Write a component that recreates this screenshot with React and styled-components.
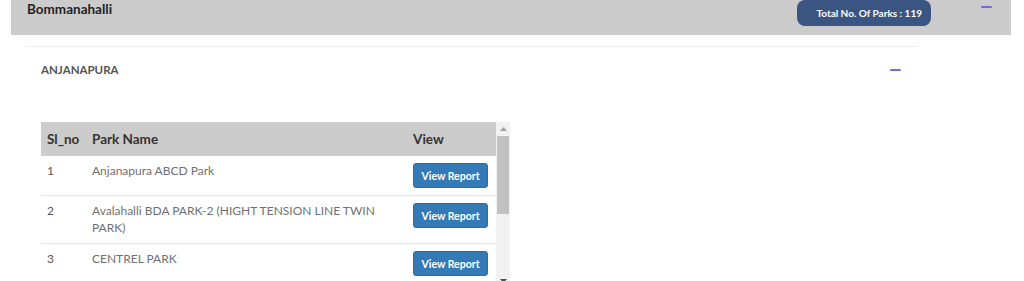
import React from "react";
import styled, { createGlobalStyle } from "styled-components";

const GlobalStyle = createGlobalStyle`
  html, body { margin: 0; padding: 0; background: #fff; }
  body { font-family: Lato, "Open Sans", "Liberation Sans", sans-serif; }
  * { box-sizing: border-box; }
`;

const Panel = styled.section`
  margin-left: 11px;
  width: 1000px;
`;

const PanelHeader = styled.header`
  display: flex;
  align-items: flex-start;
  height: 35px;
  background: #cccccc;
  padding: 0 19px 0 16px;
`;

const Title = styled.h3`
  flex: 1;
  margin: 0;
  padding-top: 1px;
  font-size: 13.5px;
  line-height: 16px;
  font-weight: 700;
  color: #222;
`;

const Badge = styled.span`
  display: flex;
  align-items: center;
  justify-content: flex-end;
  width: 134px;
  height: 26px;
  padding-right: 9px;
  border-radius: 8px;
  background: #3b5583;
  color: #fff;
  font-size: 10px;
  font-weight: 700;
  margin-right: 50px;
`;

const Minus = styled.span`
  display: block;
  width: 11px;
  height: 2px;
  border-radius: 1px;
  background: #7b67d8;
  margin-top: ${(p) => p.$top}px;
`;

const PanelBody = styled.div`
  padding: 11px 0 0 14px;
`;

const SubPanel = styled.div`
  width: 893px;
  border-top: 1px solid #efefef;
`;

const SubHeader = styled.div`
  display: flex;
  align-items: center;
  justify-content: space-between;
  padding: 13px 17px 13px 16px;
`;

const SubTitle = styled.h4`
  margin: 0;
  font-size: 11.5px;
  line-height: 20px;
  font-weight: 700;
  color: #555;
`;

const ScrollBox = styled.div`
  display: flex;
  margin: 29px 0 0 16px;
  width: 469px;
  height: 166px;
`;

const Viewport = styled.div`
  flex: 1;
  overflow: hidden;
`;

const Scrollbar = styled.div`
  display: flex;
  flex-direction: column;
  width: 14px;
  background: #f1f1f1;
`;

const ArrowBox = styled.div`
  display: flex;
  align-items: center;
  justify-content: center;
  height: 14px;
  flex: none;
`;

const Track = styled.div`
  flex: 1;
  padding: 0 1px;
`;

const Thumb = styled.div`
  height: 78px;
  background: #c1c1c1;
`;

const Table = styled.table`
  width: 100%;
  border-collapse: collapse;
`;

const Th = styled.th`
  background: #cccccc;
  text-align: left;
  font-size: 13.5px;
  line-height: 20px;
  font-weight: 700;
  color: #333;
  padding: 7px 6px;
  width: ${(p) => p.$w || "auto"};
`;

const Tr = styled.tr`
  & + & td { border-top: 1px solid #e4e4e4; }
`;

const Td = styled.td`
  vertical-align: top;
  font-size: 12px;
  line-height: 16.5px;
  color: ${(p) => (p.$num ? "#555" : "#707070")};
  padding: 7px 6px;
`;

const ReportButton = styled.button`
  display: block;
  width: 75px;
  height: 25px;
  padding: 0;
  border: 1px solid #2e6da4;
  border-radius: 3px;
  background: #337ab7;
  color: #fff;
  font-family: inherit;
  font-size: 10.5px;
  font-weight: 700;
  cursor: pointer;
`;

const parks = [
  "Anjanapura ABCD Park",
  "Avalahalli BDA PARK-2 (HIGHT TENSION LINE TWIN PARK)",
  "CENTREL PARK",
  "Gottigere Lake Park",
  "Harinagar Park",
  "Kothnur Dinne Park",
];

const Triangle = ({ down }) => (
  <svg width="7" height="4" viewBox="0 0 7 4">
    <path d={down ? "M0 0H7L3.5 4Z" : "M0 4H7L3.5 0Z"} fill={down ? "#505050" : "#a3a3a3"} />
  </svg>
);

export default function App() {
  return (
    <>
      <GlobalStyle />
      <Panel>
        <PanelHeader>
          <Title>Bommanahalli</Title>
          <Badge>Total No. Of Parks : 119</Badge>
          <Minus $top={6} />
        </PanelHeader>
        <PanelBody>
          <SubPanel>
            <SubHeader>
              <SubTitle>ANJANAPURA</SubTitle>
              <Minus $top={0} />
            </SubHeader>
            <ScrollBox>
              <Viewport>
                <Table>
                  <thead>
                    <tr>
                      <Th $w="45px">Sl_no</Th>
                      <Th>Park Name</Th>
                      <Th $w="89px">View</Th>
                    </tr>
                  </thead>
                  <tbody>
                    {parks.map((name, i) => (
                      <Tr key={name}>
                        <Td $num>{i + 1}</Td>
                        <Td>{name}</Td>
                        <Td>
                          <ReportButton>View Report</ReportButton>
                        </Td>
                      </Tr>
                    ))}
                  </tbody>
                </Table>
              </Viewport>
              <Scrollbar>
                <ArrowBox>
                  <Triangle />
                </ArrowBox>
                <Track>
                  <Thumb />
                </Track>
                <ArrowBox>
                  <Triangle down />
                </ArrowBox>
              </Scrollbar>
            </ScrollBox>
          </SubPanel>
        </PanelBody>
      </Panel>
    </>
  );
}
